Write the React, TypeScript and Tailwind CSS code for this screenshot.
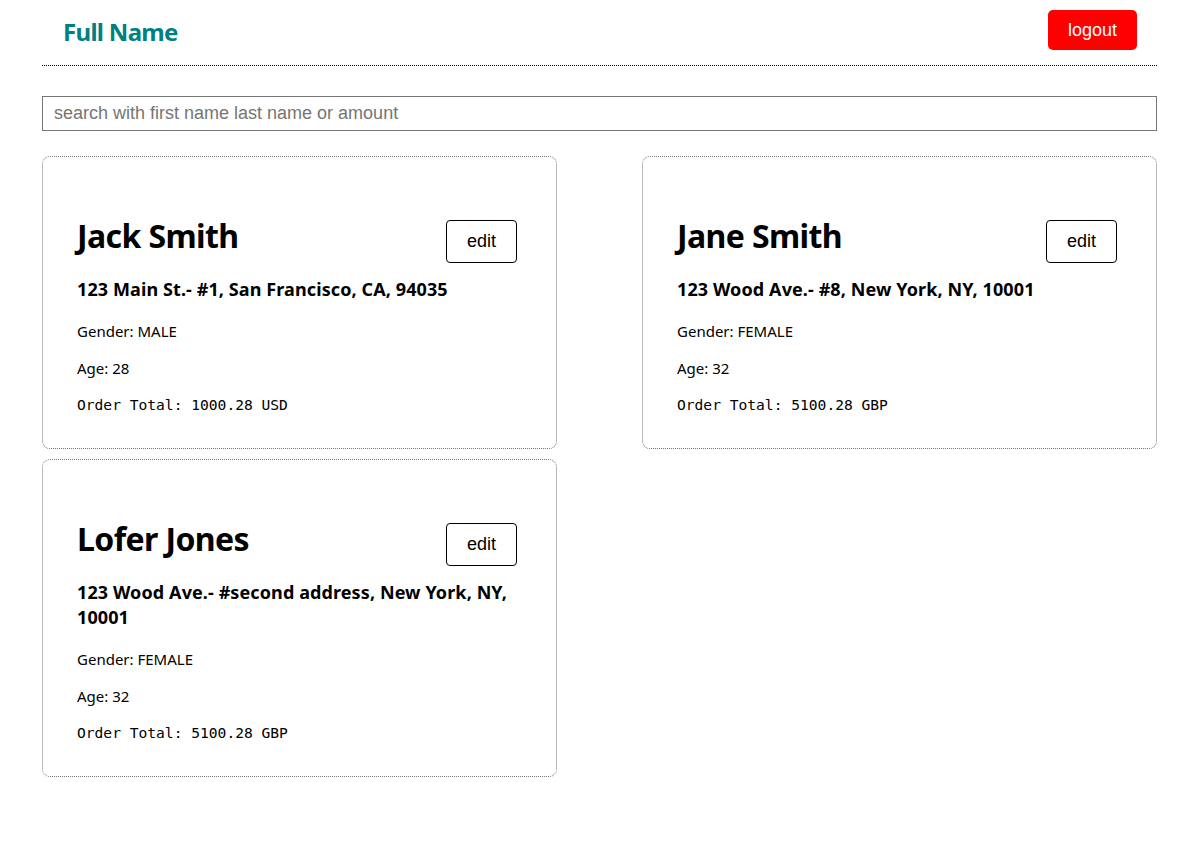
import React from "react";

type Person = {
  name: string;
  address: string;
  gender: string;
  age: number;
  total: string;
};

const people: Person[] = [
  { name: "Jack Smith", address: "123 Main St.- #1, San Francisco, CA, 94035", gender: "MALE", age: 28, total: "1000.28 USD" },
  { name: "Jane Smith", address: "123 Wood Ave.- #8, New York, NY, 10001", gender: "FEMALE", age: 32, total: "5100.28 GBP" },
  { name: "Lofer Jones", address: "123 Wood Ave.- #second address, New York, NY, 10001", gender: "FEMALE", age: 32, total: "5100.28 GBP" },
];

const sans = "font-['Noto_Sans',sans-serif]";

function Card({ p }: { p: Person }) {
  return (
    <div className={`border border-dotted border-[#777] rounded-[8px] pt-[60px] pb-[32px] pl-[34px] pr-[39px] text-black ${sans}`}>
      <div className="flex justify-between items-start">
        <h2 className="text-[32px] font-bold leading-[38px] tracking-[-0.6px]">{p.name}</h2>
        <button className="mt-[3px] w-[71px] h-[43px] border border-black rounded-[4px] bg-white text-[18px] font-['Liberation_Sans',Arial,sans-serif] text-black">
          edit
        </button>
      </div>
      <div className="mt-[14px] text-[18px] font-bold leading-[25px] tracking-[0.1px]">{p.address}</div>
      <div className="mt-[18px] text-[15px] leading-[22px]">Gender: {p.gender}</div>
      <div className="mt-[15px] text-[15px] leading-[22px]">Age: {p.age}</div>
      <div className="mt-[15px] text-[14.6px] leading-[22px] font-['DejaVu_Sans_Mono',monospace]">Order Total: {p.total}</div>
    </div>
  );
}

export default function App() {
  return (
    <div className="min-h-[855px] bg-white">
      <div className="ml-[42px] w-[1115px]">
        <div className="border-b border-dotted border-black pb-[5px]">
          <div className="flex h-[60px] items-center justify-between pl-[21px] pr-[20px]">
            <div className={`text-[24px] font-bold text-[#008080] tracking-[-0.7px] ${sans} mt-[4px]`}>Full Name</div>
            <button className="w-[89px] h-[40px] rounded-[5px] bg-[#ff0000] text-white text-[18px] font-['Liberation_Sans',Arial,sans-serif]">
              logout
            </button>
          </div>
        </div>
        <input
          className="mt-[30px] block w-full h-[35px] border border-[#767676] px-[11px] text-[18px] font-['Liberation_Sans',Arial,sans-serif] placeholder:text-[#757575] outline-none"
          placeholder="search with first name last name or amount"
        />
        <div className="mt-[25px] grid grid-cols-2 gap-x-[85px] gap-y-[10px] items-start">
          {people.map((p) => (
            <Card key={p.name} p={p} />
          ))}
        </div>
      </div>
    </div>
  );
}
